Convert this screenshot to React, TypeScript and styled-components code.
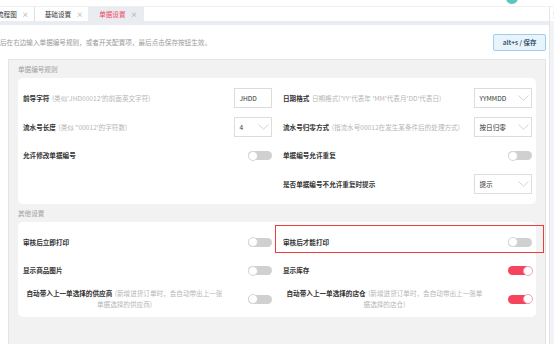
import styled, { createGlobalStyle } from 'styled-components';

const GlobalStyle = createGlobalStyle`
  html, body {
    margin: 0;
    padding: 0;
    overflow: hidden;
    background: #fff;
  }
  body {
    font-family: "Noto Sans CJK SC", "Noto Sans", sans-serif;
    font-size: 6.6px;
    color: #333;
  }
`;

const Page = styled.div`
  width: 554px;
  height: 344px;
  display: flex;
  flex-direction: column;
  overflow: hidden;
`;

const TopStrip = styled.div`
  height: 6px;
  flex-shrink: 0;
  display: flex;
  justify-content: flex-end;
  border-bottom: 1px solid #eef0f2;
`;

const Avatar = styled.span`
  width: 12px;
  height: 12px;
  margin-top: -8px;
  margin-right: 36px;
  border-radius: 50%;
  background: #5cc6c2;
`;

const Body = styled.div`
  flex: 1;
  min-height: 0;
  display: flex;
`;

const MainCol = styled.div`
  width: 549px;
  display: flex;
  flex-direction: column;
`;

const SideStrip = styled.div`
  flex: 1;
  display: flex;
  flex-direction: column;
  border-left: 1px solid #e2e4e8;
  background: #f2f3f6;
`;

const SideTop = styled.div`
  height: 14px;
  background: #fff;
  color: #aaa;
  font-size: 8px;
  line-height: 14px;
  text-align: center;
`;

const TabBar = styled.div`
  height: 14px;
  display: flex;
  align-items: stretch;
  margin-left: -13px;
`;

const Tab = styled.div<{ $active?: boolean; $divider?: boolean }>`
  display: flex;
  align-items: center;
  gap: 5px;
  padding: 0 ${({ $active }) => ($active ? '6px' : '5px')} 0 ${({ $active }) => ($active ? '11px' : '10px')};
  white-space: nowrap;
  background: ${({ $active }) => ($active ? '#e9ecf0' : '#fff')};
  color: ${({ $active }) => ($active ? '#f2475f' : '#333')};
  box-shadow: ${({ $divider }) => ($divider ? '1px 0 0 #e2e2e2' : 'none')};
  margin-right: ${({ $divider }) => ($divider ? '1px' : '0')};
`;

const TabClose = styled.span`
  color: #999;
  font-size: 7px;
`;

const Band = styled.div`
  height: 4px;
  background: #e9ecf0;
`;

const Content = styled.div`
  flex: 1;
  min-height: 0;
  background: #fff;
`;

const Header = styled.div`
  height: 34px;
  display: flex;
  align-items: center;
  justify-content: space-between;
  padding-right: 3px;
`;

const Desc = styled.span`
  margin-left: -6.6px;
  color: #9a9a9a;
  white-space: nowrap;
`;

const SaveButton = styled.button`
  width: 53px;
  height: 17px;
  padding: 0;
  border: 1px solid #9fcdee;
  border-radius: 2px;
  background: #e8f4fc;
  color: #3f5673;
  font-family: inherit;
  font-size: 6.4px;
  font-weight: bold;
`;

const Section = styled.div`
  margin: 0 3px 0 8px;
  padding: 0 9px 40px;
  border: 1px solid #e4e4e4;
  background: #f2f2f2;
`;

const GroupTitle = styled.div`
  height: 18px;
  line-height: 18px;
  color: #a0a0a0;
`;

const Card = styled.div<{ $bottom: number }>`
  display: grid;
  grid-template-columns: 249px 249px;
  grid-auto-rows: 28.7px;
  column-gap: 11px;
  padding: 6px 4px ${({ $bottom }) => $bottom}px 5px;
  background: #fff;
  border-radius: 5px;
`;

const Cell = styled.div`
  position: relative;
  display: flex;
  align-items: center;
  justify-content: space-between;
`;

const Label = styled.div<{ $center?: boolean }>`
  line-height: 11px;
  width: ${({ $center }) => ($center ? '201px' : 'auto')};
  text-align: ${({ $center }) => ($center ? 'center' : 'left')};
  margin-left: ${({ $center }) => ($center ? '1px' : '0')};
`;

const Name = styled.span`
  font-weight: bold;
  color: #333;
`;

const Hint = styled.span`
  margin-left: 2.5px;
  color: #b6b6b6;
`;

const Field = styled.div<{ $wide?: boolean }>`
  box-sizing: border-box;
  width: ${({ $wide }) => ($wide ? '58px' : '38px')};
  height: 20px;
  display: flex;
  align-items: center;
  justify-content: space-between;
  padding: 0 2px 0 4.5px;
  border: 1px solid #dcdcdc;
  color: #333;
  white-space: nowrap;
`;

const Toggle = styled.span<{ $on?: boolean }>`
  position: relative;
  flex-shrink: 0;
  width: 24px;
  height: 9px;
  border-radius: 5px;
  background: ${({ $on }) => ($on ? '#f5455e' : '#d0d0d0')};

  &::after {
    content: '';
    position: absolute;
    top: -0.5px;
    ${({ $on }) => ($on ? 'right: -0.5px;' : 'left: -0.5px;')}
    box-sizing: border-box;
    width: 10px;
    height: 10px;
    border-radius: 50%;
    background: #fff;
    border: 1px solid ${({ $on }) => ($on ? '#f7a3b0' : '#d6d6d6')};
  }
`;

const Highlight = styled.span`
  position: absolute;
  top: -3px;
  bottom: 3.7px;
  left: -8px;
  right: -12px;
  border: 1.5px solid #ee3b3b;
  pointer-events: none;
`;

function Chevron() {
  return (
    <svg width="11" height="6" viewBox="0 0 11 6" fill="none" aria-hidden="true">
      <path d="M0.5 0.5L5.5 5.2L10.5 0.5" stroke="#c6c9cf" strokeWidth="0.8" />
    </svg>
  );
}

interface RowLabelProps {
  name: string;
  hint?: string;
  center?: boolean;
}

function RowLabel({ name, hint, center }: RowLabelProps) {
  return (
    <Label $center={center}>
      <Name>{name}</Name>
      {hint ? <Hint>{hint}</Hint> : null}
    </Label>
  );
}

export default function App() {
  return (
    <>
      <GlobalStyle />
      <Page>
        <TopStrip>
          <Avatar />
        </TopStrip>
        <Body>
          <MainCol>
            <TabBar>
              <Tab $divider>
                流程图<TabClose>×</TabClose>
              </Tab>
              <Tab>
                基础设置<TabClose>×</TabClose>
              </Tab>
              <Tab $active>
                单据设置<TabClose>×</TabClose>
              </Tab>
            </TabBar>
            <Band />
            <Content>
              <Header>
                <Desc>然后在右边输入单据编号规则，或者开关配置项，最后点击保存按钮生效。</Desc>
                <SaveButton>alt+s / 保存</SaveButton>
              </Header>
              <Section>
                <GroupTitle>单据编号规则</GroupTitle>
                <Card $bottom={5}>
                  <Cell>
                    <RowLabel name="前导字符" hint="(类似'JHD00012'的前面英文字符)" />
                    <Field>JHDD</Field>
                  </Cell>
                  <Cell>
                    <RowLabel name="日期格式" hint="日期格式('YY'代表年 'MM'代表月'DD'代表日)" />
                    <Field $wide>
                      YYMMDD
                      <Chevron />
                    </Field>
                  </Cell>
                  <Cell>
                    <RowLabel name="流水号长度" hint={'(类似 "00012\'的字符数)'} />
                    <Field>
                      4
                      <Chevron />
                    </Field>
                  </Cell>
                  <Cell>
                    <RowLabel name="流水号归零方式" hint="(指流水号00012在发生某条件后的处理方式)" />
                    <Field $wide>
                      按日归零
                      <Chevron />
                    </Field>
                  </Cell>
                  <Cell>
                    <RowLabel name="允许修改单据编号" />
                    <Toggle />
                  </Cell>
                  <Cell>
                    <RowLabel name="单据编号允许重复" />
                    <Toggle />
                  </Cell>
                  <Cell />
                  <Cell>
                    <RowLabel name="是否单据编号不允许重复时提示" />
                    <Field $wide>
                      提示
                      <Chevron />
                    </Field>
                  </Cell>
                </Card>
                <GroupTitle>其他设置</GroupTitle>
                <Card $bottom={3}>
                  <Cell>
                    <RowLabel name="审核后立即打印" />
                    <Toggle />
                  </Cell>
                  <Cell>
                    <RowLabel name="审核后才能打印" />
                    <Toggle />
                    <Highlight />
                  </Cell>
                  <Cell>
                    <RowLabel name="显示商品图片" />
                    <Toggle />
                  </Cell>
                  <Cell>
                    <RowLabel name="显示库存" />
                    <Toggle $on />
                  </Cell>
                  <Cell>
                    <RowLabel
                      center
                      name="自动带入上一单选择的供应商"
                      hint="(新增进货订单时，会自动带出上一张单据选择的供应商)"
                    />
                    <Toggle />
                  </Cell>
                  <Cell>
                    <RowLabel
                      center
                      name="自动带入上一单选择的店仓"
                      hint="(新增进货订单时，会自动带出上一张单据选择的店仓)"
                    />
                    <Toggle $on />
                  </Cell>
                </Card>
              </Section>
            </Content>
          </MainCol>
          <SideStrip>
            <SideTop>⋮</SideTop>
          </SideStrip>
        </Body>
      </Page>
    </>
  );
}
